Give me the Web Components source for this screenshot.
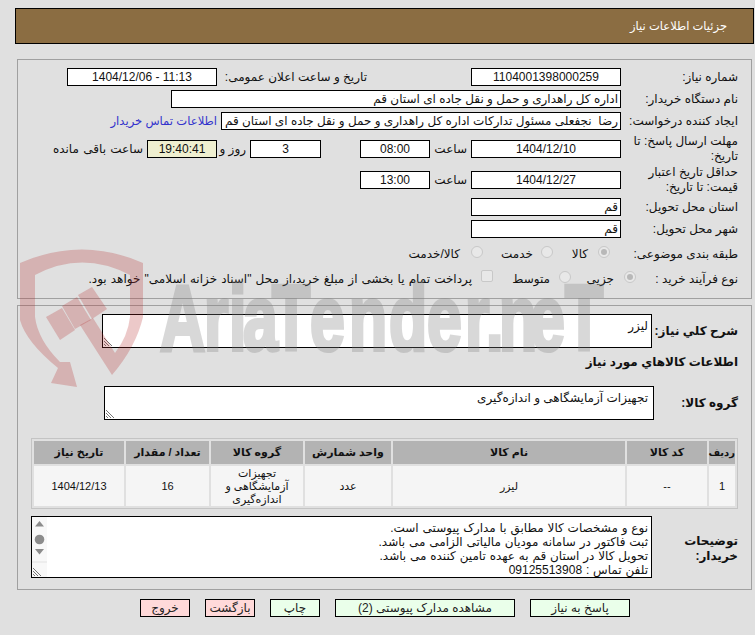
<!DOCTYPE html>
<html lang="fa" dir="rtl"><head><meta charset="utf-8"><title>جزئیات اطلاعات نیاز</title>
<style>
html,body{margin:0;padding:0;background:#e0e0e0;height:635px;overflow:hidden}
body{font:12px/15px "Liberation Sans","DejaVu Sans",sans-serif;color:#111;position:relative}
</style></head><body>
<need-page></need-page>
<script>
function def(name,css,html){
  customElements.define(name,class extends HTMLElement{
    constructor(){super();const s=this.attachShadow({mode:'open'});s.innerHTML='<style>'+css+'</style>'+html;}
  });
}
const sx=.68;
const wmX=[160,204,229,243,272,310,349,389,427,465,486,499,530,565].map(v=>(v/sx).toFixed(1)).join(' ');
def('x-header',`:host{display:flex;align-items:center;box-sizing:border-box;height:36px;margin:0 1px 0 15px;padding:0 26px 0 0;background:#8b6d42;border:1px solid #000;color:#fff;font-size:11.500px}`,`<slot></slot>`);
def('x-panel',`:host{display:block;box-sizing:border-box;margin:0 3px 0 17px;border:1px solid #a0a0a0;padding:0 13px 0 0}`,`<slot></slot>`);
def('x-row',`:host{display:flex;align-items:center;direction:rtl}`,`<slot></slot>`);
def('x-label',`:host{display:block;flex:none;box-sizing:border-box}`,`<slot></slot>`);
def('x-field',`:host{display:block;flex:none;box-sizing:border-box;height:18px;border:1px solid #000;background:#fff;padding:0 2px;line-height:16px;white-space:pre;overflow:hidden;text-align:right}
:host([center]){text-align:center;direction:ltr}:host([timer]){background:#efefd0}`,`<slot></slot>`);
def('x-area',`:host{display:block;flex:none;box-sizing:border-box;position:relative;border:1px solid #000;background:#fff;padding:4px 3px 0;line-height:14px}
svg{position:absolute;left:1px;bottom:1px}`,`<slot></slot><svg width="9" height="9" viewBox="0 0 9 9"><path d="M0 1 8 9M0 4 5 9M0 7 2 9" stroke="#777" stroke-width="1" fill="none"/></svg>`);
def('x-notes',`:host{display:block;flex:none;box-sizing:border-box;position:relative;height:62px;border:1px solid #000;background:#fff;padding:4px 3px 0 0;line-height:14px;white-space:nowrap;overflow:hidden;word-spacing:.5px}
.bar{position:absolute;left:0;top:0;bottom:0;width:15px;background:#f8f8f8;display:flex;flex-direction:column;align-items:center;direction:ltr}
.bar svg{display:block}`,`<slot></slot><div class="bar"><svg width="15" height="60" viewBox="0 0 15 60"><path d="M3 9.500 7.500 4 12 9.500Z" fill="#8c8c8c"/><circle cx="7.500" cy="22.500" r="4.800" fill="#8c8c8c"/><path d="M3 32 12 32 7.500 37.500Z" fill="#8c8c8c"/><path d="M0 45H15" stroke="#e2e2e2"/><path d="M1 51 9 59M1 54 6 59M1 57 3 59" stroke="#777" fill="none"/></svg></div>`);
def('x-radio',`:host{display:flex;align-items:center;flex:none;box-sizing:border-box;white-space:nowrap}
i{flex:none;display:block;box-sizing:border-box;width:12px;height:12px;margin:-4px 0 0 var(--gap,10px);border:1px solid #c8c8c8;border-radius:50%;background:#e8e8e8;position:relative}
:host([square]) i{border-radius:2px;margin-top:-6px}
:host([on]) i::after{content:"";position:absolute;left:2px;top:2px;width:6px;height:6px;border-radius:50%;background:#b8b8b8}`,`<i></i><slot></slot>`);
def('x-btn',`:host{display:block;box-sizing:border-box;height:18px;width:50px;border:1px solid #000;background:#eaffea;color:#222;text-align:center;line-height:16px;white-space:nowrap}
:host([danger]){background:#ffd9d9}`,`<slot></slot>`);
def('x-table',`:host{display:block;direction:rtl}
table{table-layout:fixed;border-collapse:separate;border-spacing:2px;border:1px solid #c4c4c4;width:707px;font-size:11px;line-height:13px}
th{background:#b3b3b3;height:23px;padding:0;font-weight:bold;text-align:center}
th.n{font-size:10px}
td{background:#f5f5f5;height:40px;padding:0 1px;text-align:center}`,
`<table><colgroup><col style="width:26px"><col style="width:80px"><col style="width:232px"><col style="width:86px"><col style="width:92px"><col style="width:83px"><col style="width:90px"></colgroup>
<thead><tr><th class="n">ردیف</th><th>کد کالا</th><th>نام کالا</th><th>واحد شمارش</th><th>گروه کالا</th><th>تعداد / مقدار</th><th>تاریخ نیاز</th></tr></thead>
<tbody><tr><td>1</td><td>--</td><td>لیزر</td><td>عدد</td><td>تجهیزات آزمایشگاهی و اندازه‌گیری</td><td>16</td><td>1404/12/13</td></tr></tbody></table>`);
def('x-watermark',`:host{position:absolute;left:0;top:0;width:755px;height:400px;pointer-events:none;display:block;z-index:5}
svg{display:block}text{font-family:"Liberation Sans",sans-serif;font-weight:bold;font-size:92px}`,
`<svg width="755" height="400" viewBox="0 0 755 400" direction="ltr">
<g fill="rgba(180,40,40,.25)">
<path fill-rule="evenodd" d="M20 263Q82 236 143 263V317Q136 347 112 375L80 325 93 318 115 353Q128 336 130 317V275Q82 250 35 275V317Q38 340 60 362L70 362 77 387 51 383 58 368Q26 342 20 320Z"/>
<path d="M46 317 62 308 75 330 60 340Z"/><path d="M62 306 77 297 91 320 75 329Z"/><path d="M78 295 92 287 107 309 92 319Z"/>
</g>
<text transform="scale(${sx} 1)" x="${wmX}" y="350" fill="#828282" stroke="#828282" stroke-width="4" opacity=".3">AriaTender.neT</text>
</svg>`);
def('need-page',`:host{display:block;position:relative;box-sizing:border-box;height:635px;padding-top:8px}
x-panel.a{margin-top:15px;height:240px;padding-top:8px}
x-panel.b{margin-top:6px;height:285px;padding-top:8px}
.bold{font-weight:bold}
.btns{display:flex;justify-content:center;gap:15px;margin:9px 0 0 15px;direction:rtl}
a{color:#33c;text-decoration:none;font-size:11.600px}
x-row.h18{height:18px}
.l117{width:117px;padding-left:6px}`,
`<x-watermark></x-watermark>
<x-header>جزئیات اطلاعات نیاز</x-header>
<x-panel class="a">
<x-row class="h18"><x-label class="l117">شماره نیاز:</x-label><x-field center style="width:150px">1104001398000259</x-field><x-label style="width:150px;margin-right:104px">تاریخ و ساعت اعلان عمومی:</x-label><x-field center style="width:150px">1404/12/06 - 11:13</x-field></x-row>
<x-row class="h18" style="margin-top:4px"><x-label class="l117">نام دستگاه خریدار:</x-label><x-field style="width:450px">اداره کل راهداری و حمل و نقل جاده ای استان قم</x-field></x-row>
<x-row class="h18" style="margin-top:4px"><x-label class="l117">ایجاد کننده درخواست:</x-label><x-field style="width:400px">رضا  نجفعلی مسئول تدارکات اداره کل راهداری و حمل و نقل جاده ای استان قم</x-field><x-label style="margin-right:4px"><a href="#">اطلاعات تماس خریدار</a></x-label></x-row>
<x-row style="height:30px;margin-top:4px"><x-label class="l117">مهلت ارسال پاسخ: تا تاریخ:</x-label><x-field center style="width:150px">1404/12/10</x-field><x-label style="width:41px;padding-right:4px">ساعت</x-label><x-field center style="width:70px">08:00</x-field><x-field center style="width:71px;margin-right:39px">3</x-field><x-label style="width:33px;padding-right:4px">روز و</x-label><x-field center timer style="width:70px">19:40:41</x-field><x-label style="padding-right:4px;word-spacing:1px">ساعت باقی مانده</x-label></x-row>
<x-row style="height:30px;margin-top:1px"><x-label class="l117">حداقل تاریخ اعتبار قیمت: تا تاریخ:</x-label><x-field center style="width:150px">1404/12/27</x-field><x-label style="width:41px;padding-right:4px">ساعت</x-label><x-field center style="width:70px">13:00</x-field></x-row>
<x-row class="h18" style="margin-top:3px"><x-label class="l117">استان محل تحویل:</x-label><x-field style="width:150px">قم</x-field></x-row>
<x-row class="h18" style="margin-top:4px"><x-label class="l117">شهر محل تحویل:</x-label><x-field style="width:150px">قم</x-field></x-row>
<x-row class="h18" style="margin-top:7px"><x-label class="l117" style="width:128px">طبقه بندی موضوعی:</x-label><x-radio on style="width:57px">کالا</x-radio><x-radio style="width:70px;--gap:8px">خدمت</x-radio><x-radio style="--gap:11px">کالا/خدمت</x-radio></x-row>
<x-row class="h18" style="margin-top:7px"><x-label class="l117" style="width:102px">نوع فرآیند خرید :</x-label><x-radio on style="width:65px">جزیی</x-radio><x-radio style="width:78px;--gap:9px">متوسط</x-radio><x-radio square style="--gap:9px;word-spacing:.8px">پرداخت تمام یا بخشی از مبلغ خرید،از محل "اسناد خزانه اسلامی" خواهد بود.</x-radio></x-row>
</x-panel>
<x-panel class="b">
<x-row class="bold"><x-label style="width:86px;padding-top:1px">شرح کلي نياز:</x-label><x-area style="width:550px;height:34px;font-weight:normal">لیزر</x-area></x-row>
<x-row class="bold" style="margin-top:7px;height:15px"><x-label>اطلاعات کالاهاي مورد نياز</x-label></x-row>
<x-row class="bold" style="margin-top:16px"><x-label style="width:84px">گروه کالا:</x-label><x-area style="width:550px;height:34px;font-weight:normal;padding-right:5px">تجهیزات آزمایشگاهی و اندازه‌گیری</x-area></x-row>
<x-table style="margin-top:18px"></x-table>
<x-row class="bold" style="margin-top:7px"><x-label style="width:86px;padding-top:3px">توضیحات خریدار:</x-label><x-notes style="width:621px;font-weight:normal">نوع و مشخصات کالا مطابق با مدارک پیوستی است.<br>ثبت فاکتور در سامانه مودیان مالیاتی الزامی می باشد.<br>تحویل کالا در استان قم به عهده تامین کننده می باشد.<br>تلفن تماس : 09125513908</x-notes></x-row>
</x-panel>
<div class="btns"><x-btn style="width:100px">پاسخ به نیاز</x-btn><x-btn style="width:180px">مشاهده مدارک پیوستی (2)</x-btn><x-btn>چاپ</x-btn><x-btn danger>بازگشت</x-btn><x-btn danger>خروج</x-btn></div>`);
</script></body></html>
